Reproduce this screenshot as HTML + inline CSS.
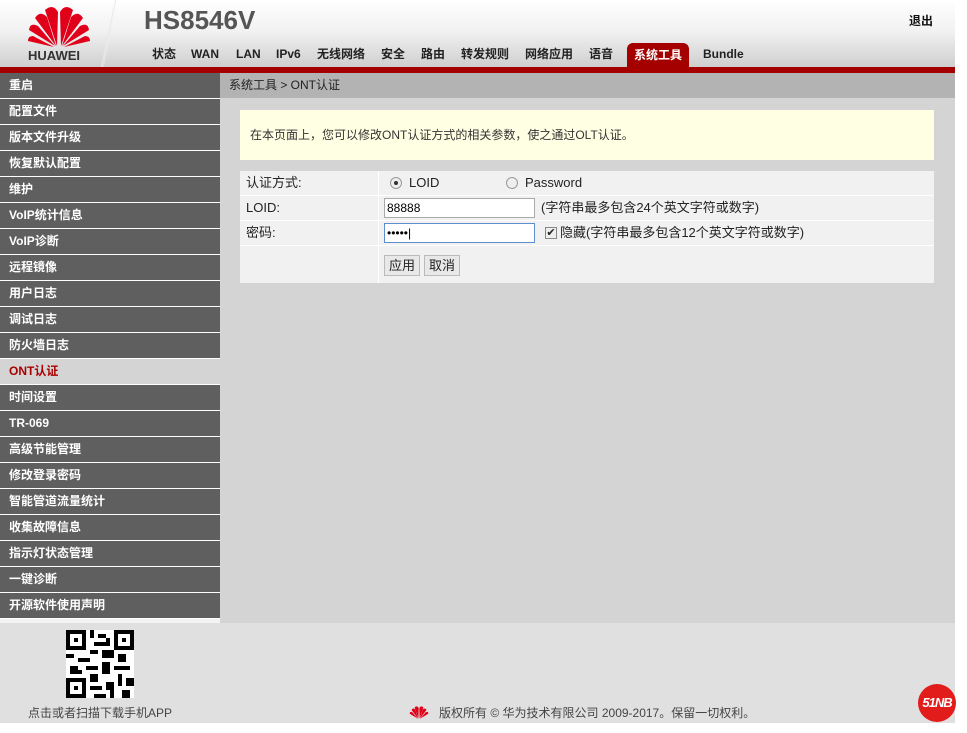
<!DOCTYPE html>
<html><head><meta charset="utf-8"><style>
*{margin:0;padding:0;box-sizing:border-box}
body{width:967px;height:733px;background:#fff;font-family:"Liberation Sans","Noto Sans CJK SC",sans-serif;font-size:12px;position:relative;overflow:hidden}
#hdr{position:absolute;left:0;top:0;width:955px;height:67px;background:linear-gradient(#fff 0%,#f2f2f2 45%,#cfcfcf 100%)}
#red{position:absolute;left:0;top:67px;width:955px;height:6px;background:#a40000}
#title{position:absolute;left:144px;top:5px;font-size:26px;font-weight:bold;color:#555}
#logout{position:absolute;left:909px;top:12px;font-weight:bold;color:#111}
.nav{position:absolute;top:46px;height:16px;line-height:16px;font-weight:bold;font-size:12px;color:#222}
#act{position:absolute;left:627px;top:43px;width:62px;height:24px;background:#a40000;border-radius:6px 6px 0 0;color:#fff;font-weight:bold;text-align:center;line-height:24px}
#slash{position:absolute;left:108px;top:0;width:3px;height:67px;background:linear-gradient(#fff,#ddd);transform:skewX(-12deg);border-left:1px solid #e8e8e8}
#side{position:absolute;left:0;top:73px;width:220px}
.it{height:25px;margin-bottom:1px;background:#5f5f5f;color:#fff;font-weight:bold;line-height:25px;padding-left:9px;font-size:12px}
.it.a{background:#d4d4d4;color:#a00}
#main{position:absolute;left:220px;top:73px;width:735px;height:550px;background:#d4d4d4}
#bc{height:25px;background:#b3b3b3;line-height:25px;padding-left:9px;color:#222}
#note{position:absolute;left:20px;top:37px;width:694px;height:50px;background:#ffffe3;line-height:50px;padding-left:10px;color:#333}
#form{position:absolute;left:20px;top:98px;width:694px;height:112px;background:#f1f1f1;font-size:13px}
.row{position:absolute;left:0;width:694px;height:25px;border-bottom:1px solid #fff;line-height:24px;color:#222}
.lab{position:absolute;left:6px}
.vl{position:absolute;left:138px;top:0;width:1px;height:112px;background:#fff}
input.t{position:absolute;left:144px;top:2px;width:151px;height:20px;border:1px solid #aaa;font-size:12px;padding-left:2px;font-family:"Liberation Sans",sans-serif;background:#fff}
.btn{position:absolute;top:84px;height:21px;border:1px solid #bbb;background:#e8e8e8;line-height:19px;padding:0 4px;color:#222}
#foot{position:absolute;left:0;top:623px;width:955px;height:100px;background:#e0e0e0;color:#444}
#strip{position:absolute;left:0;top:619px;width:220px;height:4px;background:#f3f3f3}
.rad{position:absolute;top:6px;width:12px;height:12px;border-radius:50%;border:1px solid #999;background:#eee}
</style></head><body>
<div id="hdr"></div>
<div id="slash"></div>
<svg style="position:absolute;left:27px;top:2px" width="64" height="46" viewBox="0 0 64 46">
<g fill="#e0001a">
<path d="M30 44 L18 8 Q26 1 31 10Z"/><path d="M34 44 L46 8 Q38 1 33 10Z"/>
<path d="M29 44 L8 16 Q13 8 20 15Z"/><path d="M35 44 L56 16 Q51 8 44 15Z"/>
<path d="M28 44 L2 28 Q3 20 11 24Z"/><path d="M36 44 L62 28 Q61 20 53 24Z"/>
<path d="M27 45 L1 39 Q1 34 6 34Z"/><path d="M37 45 L63 39 Q63 34 58 34Z"/>
</g></svg>
<div style="position:absolute;left:28px;top:48px;font-weight:bold;font-size:13px;color:#333">HUAWEI</div>
<div id="title">HS8546V</div>
<div id="logout">退出</div>
<div class="nav" style="left:152px">状态</div>
<div class="nav" style="left:191px">WAN</div>
<div class="nav" style="left:236px">LAN</div>
<div class="nav" style="left:276px">IPv6</div>
<div class="nav" style="left:317px">无线网络</div>
<div class="nav" style="left:381px">安全</div>
<div class="nav" style="left:421px">路由</div>
<div class="nav" style="left:461px">转发规则</div>
<div class="nav" style="left:525px">网络应用</div>
<div class="nav" style="left:589px">语音</div>
<div id="act">系统工具</div>
<div class="nav" style="left:703px">Bundle</div>
<div id="red"></div>
<div id="side">
<div class="it">重启</div><div class="it">配置文件</div><div class="it">版本文件升级</div><div class="it">恢复默认配置</div><div class="it">维护</div><div class="it">VoIP统计信息</div><div class="it">VoIP诊断</div><div class="it">远程镜像</div><div class="it">用户日志</div><div class="it">调试日志</div><div class="it">防火墙日志</div><div class="it a">ONT认证</div><div class="it">时间设置</div><div class="it">TR-069</div><div class="it">高级节能管理</div><div class="it">修改登录密码</div><div class="it">智能管道流量统计</div><div class="it">收集故障信息</div><div class="it">指示灯状态管理</div><div class="it">一键诊断</div><div class="it">开源软件使用声明</div>
</div>
<div id="strip"></div>
<div id="main">
<div id="bc">系统工具 &gt; ONT认证</div>
<div id="note">在本页面上，您可以修改ONT认证方式的相关参数，使之通过OLT认证。</div>
<div id="form">
<div class="row" style="top:0"><span class="lab">认证方式:</span>
<span class="rad" style="left:150px"><span style="position:absolute;left:3px;top:3px;width:4px;height:4px;border-radius:50%;background:#333"></span></span><span style="position:absolute;left:169px">LOID</span>
<span class="rad" style="left:266px"></span><span style="position:absolute;left:285px">Password</span></div>
<div class="row" style="top:25px"><span class="lab">LOID:</span><input class="t" value="88888"><span style="position:absolute;left:301px">(字符串最多包含24个英文字符或数字)</span></div>
<div class="row" style="top:50px"><span class="lab">密码:</span><input class="t" value="•••••|" style="border-color:#5b8fd0"><span style="position:absolute;left:305px;top:6px;width:12px;height:12px;border:1px solid #888;background:#eee;font-size:11px;line-height:10px;text-align:center">✔</span><span style="position:absolute;left:320px">隐藏(字符串最多包含12个英文字符或数字)</span></div>
<div class="vl"></div>
<div class="btn" style="left:144px">应用</div><div class="btn" style="left:184px">取消</div>
</div>
</div>
<div id="foot">
<svg style="position:absolute;left:66px;top:7px" width="68" height="68" viewBox="0 0 17 17">
<rect width="17" height="17" fill="#fff"/>
<g fill="#000"><path d="M0 0h5v5h-5zM12 0h5v5h-5zM0 12h5v5h-5z"/></g>
<g fill="#fff"><path d="M1 1h3v3h-3zM13 1h3v3h-3zM1 13h3v3h-3z"/></g>
<g fill="#000"><path d="M2 2h1v1h-1zM14 2h1v1h-1zM2 14h1v1h-1z"/>
<path d="M6 0h1v2h-1zM8 1h2v1h-2zM7 3h3v1h-3zM6 5h2v1h-2zM9 5h3v2h-3zM0 6h2v1h-2zM3 7h3v1h-3zM13 6h2v2h-2zM1 9h2v2h-2zM5 9h3v1h-3zM9 8h2v3h-2zM12 9h4v1h-4zM6 11h2v2h-2zM13 11h1v3h-1zM15 12h2v2h-2zM6 14h3v1h-3zM10 13h2v2h-2zM7 16h3v1h-3zM11 15h1v2h-1zM14 15h2v2h-2zM3 10h1v1h-1zM10 2h1v2h-1z"/></g>
</svg>
<div style="position:absolute;left:28px;top:81px">点击或者扫描下载手机APP</div>
<svg style="position:absolute;left:409px;top:81px" width="20" height="16" viewBox="0 0 64 46"><g fill="#e0001a"><path d="M30 44 L18 8 Q26 1 31 10Z"/><path d="M34 44 L46 8 Q38 1 33 10Z"/><path d="M29 44 L8 16 Q13 8 20 15Z"/><path d="M35 44 L56 16 Q51 8 44 15Z"/><path d="M28 44 L2 28 Q3 20 11 24Z"/><path d="M36 44 L62 28 Q61 20 53 24Z"/></g></svg>
<div style="position:absolute;left:439px;top:81px">版权所有 © 华为技术有限公司 2009-2017。保留一切权利。</div>
</div>
<div style="position:absolute;left:918px;top:684px;width:38px;height:38px;border-radius:50%;background:#e21b1b;color:#fff;font-weight:bold;font-style:italic;font-size:13px;line-height:38px;text-align:center;letter-spacing:-1px">51NB</div>
</body></html>
